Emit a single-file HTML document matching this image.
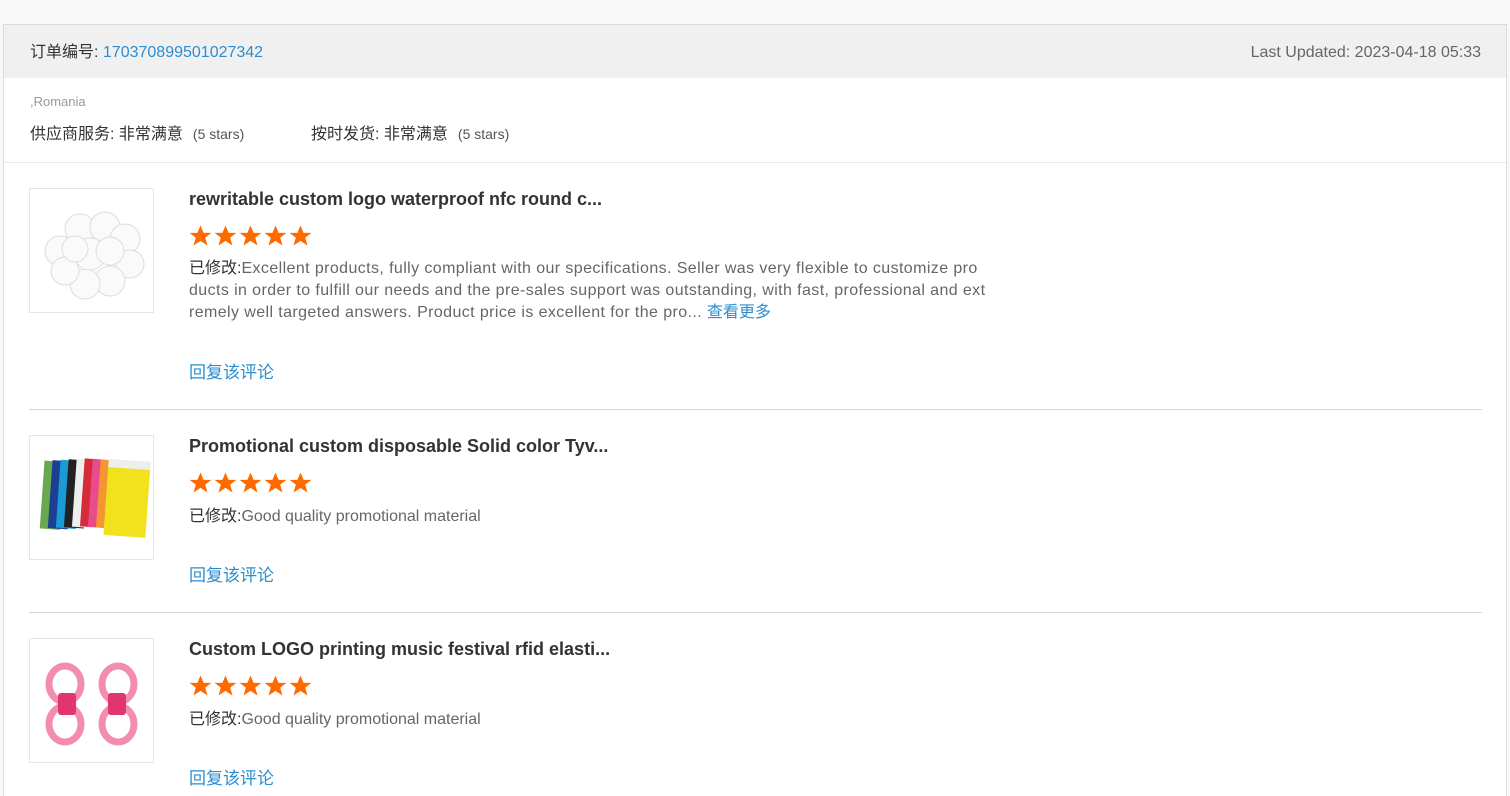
<!DOCTYPE html>
<html><head><meta charset="utf-8">
<style>
*{box-sizing:border-box;margin:0;padding:0}
html{overflow:hidden;height:796px}
body{width:1510px;height:796px;background:#f8f8f8;font-family:"Liberation Sans","Noto Sans CJK SC",sans-serif;overflow:hidden;position:relative;line-height:1.15}
.box{position:absolute;left:3px;top:24px;width:1504px;height:780px;background:#fff;border:1px solid #dadada}
.hd{position:absolute;left:0;top:0;width:100%;height:53px;background:#f0f0f0;font-size:16px;color:#333}
.hd .l{position:absolute;left:26px;top:19px}
.hd .r{position:absolute;right:25px;top:19px;color:#666}
.blue{color:#2a8ed0}
.abs{position:absolute}
.meta{font-size:13px;color:#999;left:26px;top:70px}
.rate{font-size:16px;color:#333;top:101px}
.rate small{font-size:14px;color:#555;margin-left:10px}
.sep{position:absolute;height:1px;background:#d6d6d6}
.img{position:absolute;left:25px;width:125px;height:125px;border:1px solid #e6e6e6;background:#fff;overflow:hidden}
.title{position:absolute;left:185px;font-size:18px;font-weight:bold;color:#333}
.stars{position:absolute;left:185px}
.txt{position:absolute;left:185px;font-size:16px;color:#666;line-height:22px;white-space:nowrap;letter-spacing:.4px}
.txt b{font-weight:normal;color:#333;font-size:16px;letter-spacing:0}
.reply{position:absolute;left:185px;font-size:17px;color:#2a8ed0}
</style></head><body>
<div class="box">
 <div class="hd"><span class="l">订单编号: <span class="blue">170370899501027342</span></span><span class="r">Last Updated: 2023-04-18 05:33</span></div>
 <div class="abs meta">,Romania</div>
 <div class="abs rate" style="left:26px">供应商服务: 非常满意<small>(5 stars)</small></div>
 <div class="abs rate" style="left:307px">按时发货: 非常满意<small>(5 stars)</small></div>
 <div class="sep" style="left:0;top:137px;width:100%;background:#e8e8e8"></div>

 <div class="img" style="top:163px">
  <svg width="125" height="125"><g fill="#fafafa" stroke="#ddd" stroke-width="1">
  <circle cx="30" cy="62" r="15"/><circle cx="50" cy="40" r="15"/><circle cx="75" cy="38" r="15"/><circle cx="95" cy="50" r="15"/><circle cx="100" cy="75" r="14"/><circle cx="80" cy="92" r="15"/><circle cx="55" cy="95" r="15"/><circle cx="35" cy="82" r="14"/><circle cx="60" cy="65" r="16"/><circle cx="80" cy="62" r="14"/><circle cx="45" cy="60" r="13"/></g></svg>
 </div>
 <div class="title" style="top:164px">rewritable custom logo waterproof nfc round c...</div>
 <svg class="stars" style="top:200px" width="125" height="23"><g fill="#ff6a00"><path id="s" d="M11.5 0.5l3.1 7.4h7.8l-6.2 4.7 2.3 7.9-7-4.6-7 4.6 2.3-7.9L0.6 7.9h7.8z"/><use href="#s" x="25"/><use href="#s" x="50"/><use href="#s" x="75"/><use href="#s" x="100"/></g></svg>
 <div class="txt" style="top:233px"><b>已修改:</b>Excellent products, fully compliant with our specifications. Seller was very flexible to customize pro<br>ducts in order to fulfill our needs and the pre-sales support was outstanding, with fast, professional and ext<br>remely well targeted answers. Product price is excellent for the pro... <span class="blue" style="letter-spacing:0">查看更多</span></div>
 <div class="reply" style="top:338px">回复该评论</div>
 <div class="sep" style="left:25px;top:384px;width:1453px"></div>

 <div class="img" style="top:410px">
  <svg width="125" height="125">
  <g transform="rotate(4 62 62)">
  <rect x="12" y="28" width="20" height="68" fill="#6aa84f"/><rect x="20" y="27" width="20" height="68" fill="#1c3f94"/><rect x="28" y="26" width="20" height="68" fill="#1a9bd7"/><rect x="36" y="25" width="20" height="68" fill="#222"/><rect x="44" y="24" width="20" height="68" fill="#eee"/><rect x="52" y="23" width="20" height="68" fill="#d52b3a"/><rect x="60" y="23" width="20" height="68" fill="#e84c8b"/><rect x="68" y="23" width="20" height="68" fill="#f39530"/><rect x="76" y="22" width="42" height="76" fill="#f2e21e"/><rect x="76" y="22" width="42" height="8" fill="#eee"/></g></svg>
 </div>
 <div class="title" style="top:411px">Promotional custom disposable Solid color Tyv...</div>
 <svg class="stars" style="top:447px" width="125" height="23"><g fill="#ff6a00"><use href="#s"/><use href="#s" x="25"/><use href="#s" x="50"/><use href="#s" x="75"/><use href="#s" x="100"/></g></svg>
 <div class="txt" style="top:481px;letter-spacing:0"><b>已修改:</b>Good quality promotional material</div>
 <div class="reply" style="top:541px">回复该评论</div>
 <div class="sep" style="left:25px;top:587px;width:1453px"></div>

 <div class="img" style="top:613px">
  <svg width="125" height="125"><g fill="none" stroke="#f07aa0" stroke-width="7" opacity=".85">
  <ellipse cx="35" cy="45" rx="16" ry="18"/><ellipse cx="35" cy="85" rx="16" ry="18"/><ellipse cx="88" cy="45" rx="16" ry="18"/><ellipse cx="88" cy="85" rx="16" ry="18"/></g>
  <rect x="28" y="54" width="18" height="22" rx="3" fill="#e0356e"/><rect x="78" y="54" width="18" height="22" rx="3" fill="#e0356e"/></svg>
 </div>
 <div class="title" style="top:614px">Custom LOGO printing music festival rfid elasti...</div>
 <svg class="stars" style="top:650px" width="125" height="23"><g fill="#ff6a00"><use href="#s"/><use href="#s" x="25"/><use href="#s" x="50"/><use href="#s" x="75"/><use href="#s" x="100"/></g></svg>
 <div class="txt" style="top:684px;letter-spacing:0"><b>已修改:</b>Good quality promotional material</div>
 <div class="reply" style="top:744px">回复该评论</div>
</div>
</body></html>
